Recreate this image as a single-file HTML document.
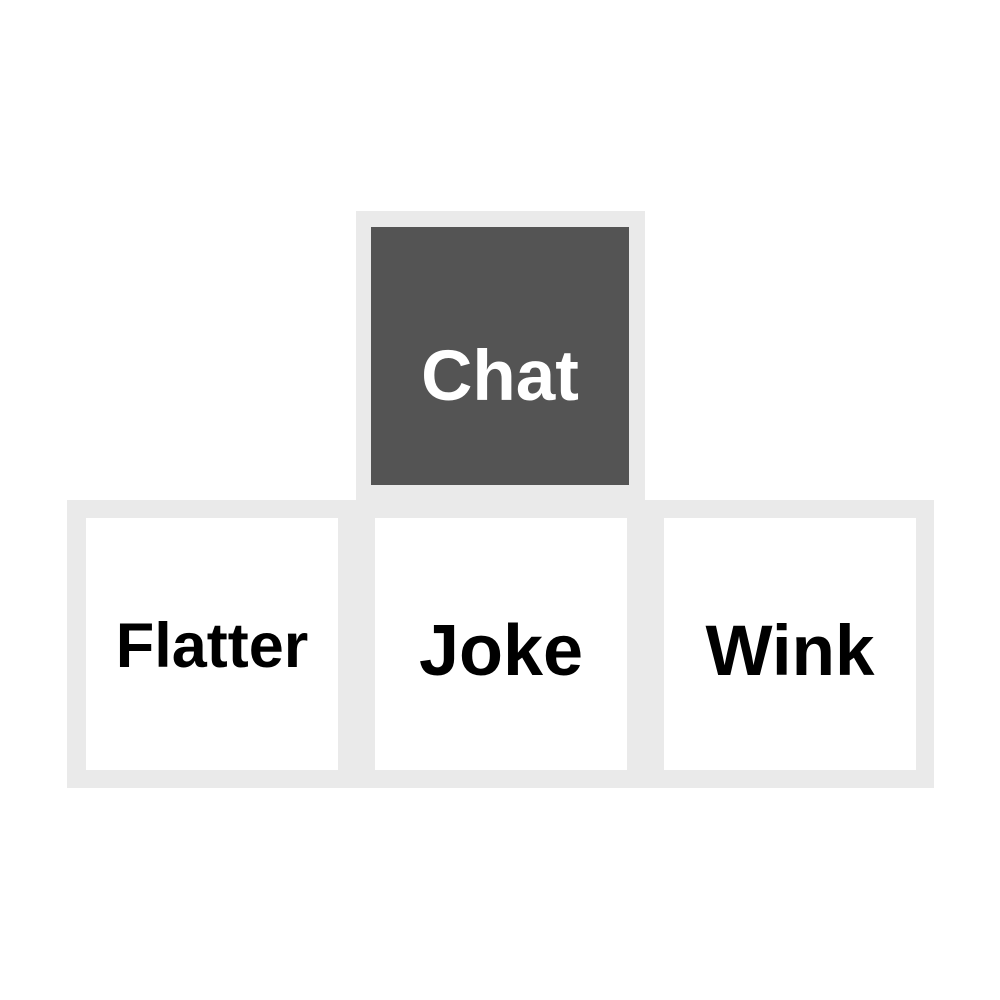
<!DOCTYPE html>
<html><head><style>
body{margin:0;width:1000px;height:1000px;background:#fff;position:relative;overflow:hidden;font-family:"Liberation Sans",Arial,sans-serif;font-weight:bold}
.b{position:absolute;background:#eaeaea}
.i{position:absolute;background:#fff;display:flex;align-items:center;justify-content:center;color:#000;box-sizing:border-box}
</style></head><body>
<div class="b" style="left:356px;top:211px;width:289px;height:300px"></div>
<div class="i" style="left:371px;top:227px;width:258px;height:258px;background:#545454;color:#fff;font-size:71px;padding-top:40px">Chat</div>
<div class="b" style="left:67px;top:500px;width:867px;height:288px"></div>
<div class="i" style="left:86px;top:518px;width:252px;height:252px;font-size:63px;padding-top:4px">Flatter</div>
<div class="i" style="left:375px;top:518px;width:252px;height:252px;font-size:72px;padding-top:14px">Joke</div>
<div class="i" style="left:664px;top:518px;width:252px;height:252px;font-size:71px;padding-top:14px">Wink</div>
</body></html>
